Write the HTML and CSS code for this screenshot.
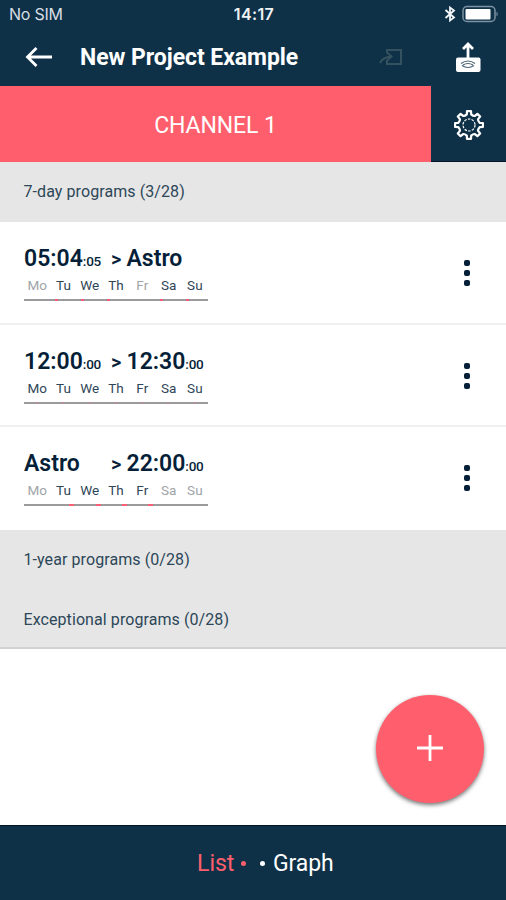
FILE: index.html
```html
<!DOCTYPE html>
<html lang="en">
<head>
<meta charset="utf-8">
<title>New Project Example</title>
<link rel="stylesheet" href="styles.css">
</head>
<body>
<div class="app">
  <header>
    <div class="status">
      <span class="carrier">No SIM</span>
      <span class="clock">14:17</span>
      <span class="indicators">
        <svg width="12" height="18" viewBox="0 0 12 18" fill="none" stroke="#f3f6f8" stroke-width="1.800"><path d="M1.500 5 L10 12.500 L6 15.500 V2.500 L10 5.500 L1.500 13"/></svg>
        <svg width="37" height="18" viewBox="0 0 37 18"><rect x="1" y="1.500" width="32" height="15" rx="4" fill="none" stroke="#7c92a2" stroke-width="1.500"/><rect x="3.500" y="4" width="25" height="10.500" rx="1" fill="#fff"/><path d="M34.500 6.500 Q37 9 34.500 11.500 Z" fill="#7c92a2"/></svg>
      </span>
    </div>
    <div class="titlebar">
      <svg class="back" width="28" height="22" viewBox="0 0 28 22" fill="none" stroke="#fff" stroke-width="2.800"><path d="M27 11 H3 M11.500 2 L2.500 11 L11.500 20"/></svg>
      <h1>New Project Example</h1>
      <svg class="import" width="26" height="20" viewBox="0 0 26 20" fill="none" stroke="#34515f" stroke-width="2"><path d="M8 6 V3 H22 V17 H8 V13"/><path d="M1 16 Q4 10 12 9.500 M8 5.500 L12.500 9.500 L8 13.500"/></svg>
      <svg class="upload" width="28" height="32" viewBox="0 0 28 32"><rect x="2" y="16.500" width="24.500" height="14.500" rx="2" fill="#fff"/><path d="M14 17 V3.500 M9 8 L14 3 L19 8" fill="none" stroke="#fff" stroke-width="2.800"/><path d="M7 22.500 Q14 17.500 21 22.500 M9 24 Q14 21 19 24 M8 24.500 Q14 28.500 20 24.500" fill="none" stroke="#486173" stroke-width="1.200"/></svg>
    </div>
  </header>
  <div class="tabs">
    <div class="channel">CHANNEL 1</div>
    <div class="settings">
      <svg width="32" height="32" viewBox="-16 -16 32 32" fill="none" stroke="#fff"><path stroke-width="2.200" stroke-linejoin="round" d="M-2.200 -10.600 L-2 -13.900 H2 L2.200 -10.600 Q4.200 -8.800 5.900 -9.050 L8.400 -11.200 L11.200 -8.400 L9.050 -5.900 Q8.800 -4.200 10.600 -2.200 L13.900 -2 V2 L10.600 2.200 Q8.800 4.200 9.050 5.900 L11.200 8.400 L8.400 11.200 L5.900 9.050 Q4.200 8.800 2.200 10.600 L2 13.900 H-2 L-2.200 10.600 Q-4.200 8.800 -5.900 9.050 L-8.400 11.200 L-11.200 8.400 L-9.050 5.900 Q-8.800 4.200 -10.600 2.200 L-13.900 2 V-2 L-10.600 -2.200 Q-8.800 -4.200 -9.050 -5.900 L-11.200 -8.400 L-8.400 -11.200 L-5.900 -9.050 Q-4.200 -8.800 -2.200 -10.600 Z"/><circle r="6" stroke-width="1.200" stroke-dasharray="2.500 1.270"/></svg>
    </div>
  </div>
  <main>
    <div class="section">7-day programs (3/28)</div>
    <article class="program">
      <div class="info">
        <div class="times"><span class="from">05:04<small>:05</small></span><span class="to">&gt;</span><span>Astro</span></div>
        <div class="days"><span class="off">Mo</span><span>Tu</span><span>We</span><span>Th</span><span class="off">Fr</span><span>Sa</span><span>Su</span></div>
        <div class="track morning"><i></i><i class="on"></i><i class="on"></i><i class="on"></i><i></i><i class="on"></i><i class="on"></i></div>
      </div>
      <div class="more"><i></i><i></i><i></i></div>
    </article>
    <article class="program">
      <div class="info">
        <div class="times"><span class="from">12:00<small>:00</small></span><span class="to">&gt;</span><span>12:30<small>:00</small></span></div>
        <div class="days"><span>Mo</span><span>Tu</span><span>We</span><span>Th</span><span>Fr</span><span>Sa</span><span>Su</span></div>
        <div class="track noon"><i class="on"></i><i class="on"></i><i class="on"></i><i class="on"></i><i class="on"></i><i class="on"></i><i class="on"></i></div>
      </div>
      <div class="more"><i></i><i></i><i></i></div>
    </article>
    <article class="program last">
      <div class="info">
        <div class="times"><span class="from">Astro</span><span class="to">&gt;</span><span>22:00<small>:00</small></span></div>
        <div class="days"><span class="off">Mo</span><span>Tu</span><span>We</span><span>Th</span><span>Fr</span><span class="off">Sa</span><span class="off">Su</span></div>
        <div class="track evening"><i></i><i class="on"></i><i class="on"></i><i class="on"></i><i class="on"></i><i></i><i></i></div>
      </div>
      <div class="more"><i></i><i></i><i></i></div>
    </article>
    <div class="section">1-year programs (0/28)</div>
    <div class="section end">Exceptional programs (0/28)</div>
  </main>
  <button class="add" aria-label="Add"><svg width="26" height="26" viewBox="0 0 26 26" stroke="#fff" stroke-width="2.800"><path d="M13 0 V26 M0 13 H26"/></svg></button>
  <footer><span class="list">List</span><i class="dot red"></i><i class="dot"></i><span class="graph">Graph</span></footer>
</div>
</body>
</html>
```

FILE: styles.css
```css
* { box-sizing: border-box; }
body { margin: 0; font-family: Roboto, sans-serif; color: #0d3048; background: #fff; }
svg { display: block; flex: none; }
.app { position: relative; width: 506px; height: 900px; display: flex; flex-direction: column; overflow: hidden; }
header { height: 86px; background: #0e3148; color: #fff; flex: none; }
.status { height: 28px; display: grid; grid-template-columns: 1fr auto 1fr; align-items: center; padding: 0 7px 0 9px; }
.carrier { font: 16px/20px Inter, sans-serif; letter-spacing: -.25px; color: #d8dfe4; }
.clock { font: 600 16px/20px Inter, sans-serif; letter-spacing: .4px; color: #eef2f4; }
.indicators { display: flex; justify-content: flex-end; align-items: center; gap: 6px; }
.titlebar { height: 58px; display: flex; align-items: center; padding: 0 24px 0 25px; }
h1 { margin: 2px 0 0 27px; font-size: 23px; font-weight: 700; line-height: 30px; width: 299px; white-space: nowrap; letter-spacing: -.06px; }
.upload { margin-left: auto; }
.tabs { height: 76px; display: flex; flex: none; }
.channel { width: 431px; background: #ff5f6d; color: #fff; font-size: 23px; letter-spacing: -.1px; display: flex; align-items: center; justify-content: center; padding-top: 2px; }
.settings { flex: 1; background: #0e3148; border-bottom: 1px solid #04142a; display: flex; align-items: center; justify-content: center; padding-top: 2px; }
main { flex: 1; }
.section { height: 60px; background: #e6e6e6; color: #2d4658; font-size: 16px; line-height: 60px; padding-left: 23.500px; letter-spacing: .08px; }
.section.end { height: 59px; border-bottom: 2px solid #d0d2d3; line-height: 59px; }
.program { height: 102.500px; border-bottom: 2px solid #f0f0f0; display: flex; justify-content: space-between; padding: 24px 36px 0 24px; }
.program.last { height: 103px; border: 0; }
.info { width: 184px; }
.times { display: flex; height: 26px; font-size: 23px; line-height: 26px; font-weight: 600; color: #061f38; white-space: nowrap; letter-spacing: 0; }
.times small { font-size: 13.500px; font-weight: 500; letter-spacing: -.25px; }
.from { width: 87px; }
.to { width: 15.500px; font-size: 20px; }
.days { display: grid; grid-template-columns: repeat(7, 1fr); height: 27px; font-size: 13.500px; line-height: 27px; text-align: center; letter-spacing: 0; color: #2f4658; }
.off { color: #a0a4a8; }
.track { display: grid; grid-template-columns: repeat(7, 1fr); height: 2px; background: #9b9b9b; }
.track i { height: 2px; }
.morning .on { width: 3px; margin-left: 4.500px; background: #f45b78; }
.noon .on { width: 2px; margin-left: 12px; background: #b58c93; }
.evening .on { width: 5px; margin-left: 19px; background: #ff5f75; }
.more { display: flex; flex-direction: column; gap: 4px; padding-top: 14px; }
.more i { width: 6px; height: 6px; border-radius: 2px; background: #061f38; }
.add { position: absolute; left: 376px; top: 695px; width: 108px; height: 108px; border: 0; border-radius: 50%; background: #ff5f6d; display: flex; align-items: center; justify-content: center; padding: 0 0 2px; box-shadow: 0 2px 4px rgba(0,0,0,.55); }
.add svg { margin-right: 1px; }
footer { height: 75px; flex: none; background: #0e3148; border-top: 1px solid #04142a; color: #fff; display: flex; align-items: center; padding: 1px 0 0 197px; font-size: 23px; }
.list { color: #ff5f6d; width: 43px; }
.graph { letter-spacing: -.1px; }
.dot { width: 5px; height: 5px; border-radius: 50%; background: #fff; margin-right: 8px; }
.dot.red { background: #ff5f6d; margin-left: 1px; margin-right: 14px; }
```
